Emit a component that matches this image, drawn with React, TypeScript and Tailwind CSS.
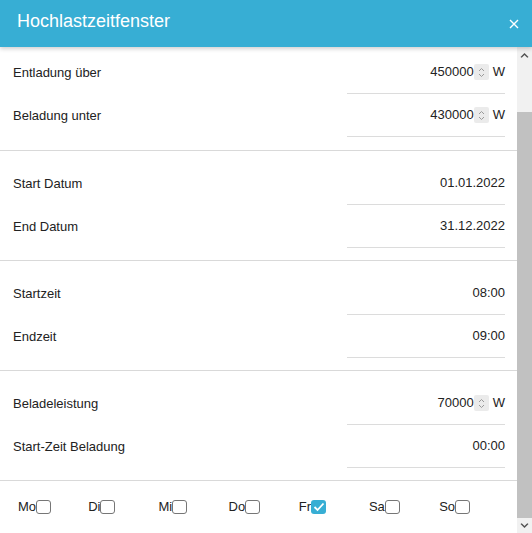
import { useState } from "react";

const font = { fontFamily: '"Liberation Sans", Arial, sans-serif' };

function Spinner() {
  return (
    <span className="flex items-center justify-center w-[15px] h-[16px] bg-[#ebebeb] rounded-[2px]">
      <svg width="7" height="11" viewBox="0 0 7 11" fill="none" stroke="#9a9a9a" strokeWidth="1">
        <path d="M1 4 L3.5 1.5 L6 4" />
        <path d="M1 7 L3.5 9.5 L6 7" />
      </svg>
    </span>
  );
}

function Row({ label, value, unit }: { label: string; value: string; unit?: boolean }) {
  return (
    <div className="flex h-[43px]">
      <div className="flex items-center pl-[13px] flex-1">{label}</div>
      <div className="w-[158px] mr-[12px] border-b border-[#dcdcdc] flex items-center justify-end">
        <span>{value}</span>
        {unit && (
          <>
            <Spinner />
            <span className="ml-[4px]">W</span>
          </>
        )}
      </div>
    </div>
  );
}

function Section({ children, first }: { children: React.ReactNode; first?: boolean }) {
  return (
    <div className={(first ? "pt-[4px] pb-[13px]" : "pt-[11px] pb-[12px]") + " border-b border-[#d9d9d9]"}>
      {children}
    </div>
  );
}

function Box({ checked, onClick }: { checked: boolean; onClick: () => void }) {
  return (
    <span
      onClick={onClick}
      className={
        checked
          ? "flex items-center justify-center w-[15px] h-[14px] rounded-[3px] bg-[#37aed4]"
          : "w-[15px] h-[14px] rounded-[3px] border border-[#767676] bg-white"
      }
    >
      {checked && (
        <svg width="12" height="10" viewBox="0 0 12 10" fill="none" stroke="white" strokeWidth="1.8">
          <path d="M1.5 5 L4.5 8 L10.5 1.5" />
        </svg>
      )}
    </span>
  );
}

export default function App() {
  const [days, setDays] = useState([false, false, false, false, true, false, false]);
  const names = ["Mo", "Di", "Mi", "Do", "Fr", "Sa", "So"];

  return (
    <div className="w-[532px] h-[533px] flex flex-col bg-white overflow-hidden text-[13px] text-[#222222]" style={font}>
      {/* Header */}
      <div className="relative z-10 h-[47px] flex items-center justify-between pl-[17px] pr-[13px] pb-[4px] bg-[#37aed4] text-white shadow-[0_2px_4px_rgba(0,0,0,0.18)]">
        <span className="text-[18px]">Hochlastzeitfenster</span>
        <svg width="10" height="10" viewBox="0 0 10 10" stroke="white" strokeWidth="1.4" className="mt-[4px]">
          <path d="M1 1 L9 9 M9 1 L1 9" />
        </svg>
      </div>

      <div className="flex flex-1 min-h-0">
        {/* Content */}
        <div className="flex-1 overflow-hidden">
          <Section first>
            <Row label="Entladung über" value="450000" unit />
            <Row label="Beladung unter" value="430000" unit />
          </Section>
          <Section>
            <Row label="Start Datum" value="01.01.2022" />
            <Row label="End Datum" value="31.12.2022" />
          </Section>
          <Section>
            <Row label="Startzeit" value="08:00" />
            <Row label="Endzeit" value="09:00" />
          </Section>
          <Section>
            <Row label="Beladeleistung" value="70000" unit />
            <Row label="Start-Zeit Beladung" value="00:00" />
          </Section>
          <div className="flex pl-[18px] pt-[16px]">
            {names.map((n, i) => (
              <div key={n} className="w-[70.2px] flex items-center h-[20px]">
                <span>{n}</span>
                <Box
                  checked={days[i]}
                  onClick={() => setDays(days.map((d, j) => (j === i ? !d : d)))}
                />
              </div>
            ))}
          </div>
        </div>

        {/* Scrollbar */}
        <div className="w-[15px] flex flex-col bg-[#f1f1f1]">
          <div className="h-[15px] flex items-center justify-center">
            <svg width="9" height="6" viewBox="0 0 9 6" fill="#505050">
              <path d="M0.5 5 L4.5 1 L8.5 5 L7.3 5.8 L4.5 3 L1.7 5.8 Z" />
            </svg>
          </div>
          <div className="h-[50px]" />
          <div className="flex-1 bg-[#c1c1c1]" />
          <div className="h-[15px] flex items-center justify-center">
            <svg width="9" height="6" viewBox="0 0 9 6" fill="#505050">
              <path d="M0.5 1 L4.5 5 L8.5 1 L7.3 0.2 L4.5 3 L1.7 0.2 Z" />
            </svg>
          </div>
        </div>
      </div>
    </div>
  );
}
